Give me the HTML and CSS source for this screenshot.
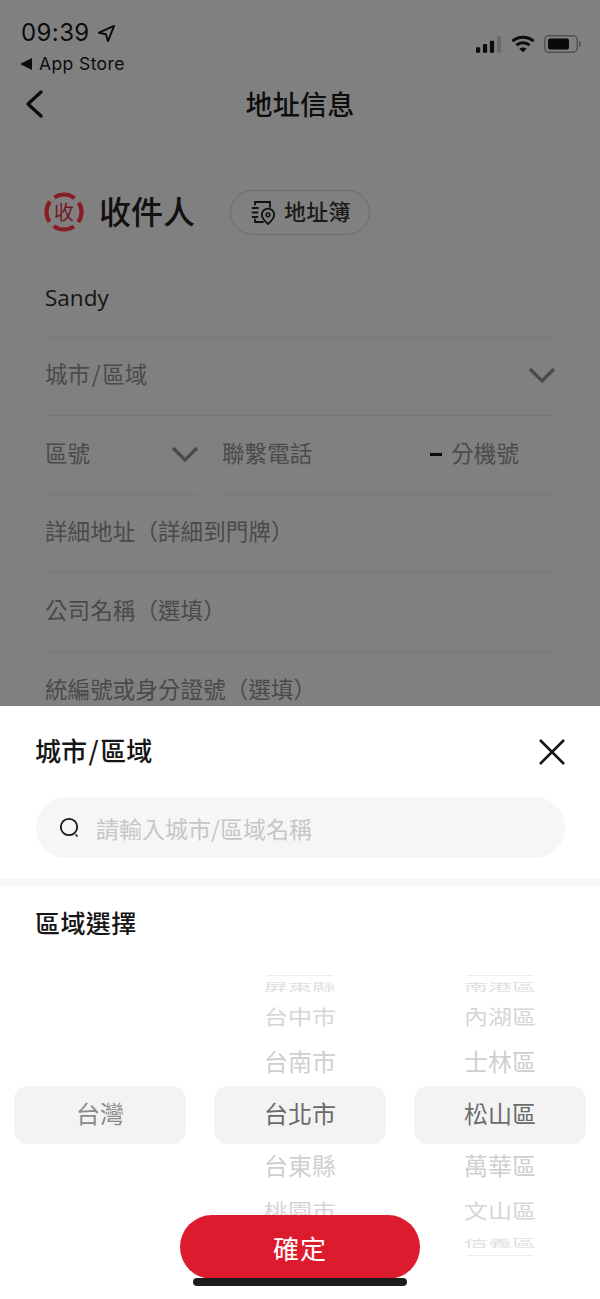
FILE: index.html
```html
<!DOCTYPE html>
<html lang="zh-Hant">
<head>
<meta charset="utf-8">
<title>地址信息</title>
<link rel="stylesheet" href="styles.css">
</head>
<body>
<div class="app">
  <div class="status">
    <div class="status-left">
      <div class="time-row">
        <span class="time">09:39</span>
        <svg class="loc" viewBox="0 0 20 20"><path d="M18 2 2 9.2l7.4 1.600L11.600 18Z" fill="none" stroke="#0c0c0c" stroke-width="2" stroke-linejoin="round"/></svg>
      </div>
      <div class="back-app"><span class="tri"></span><span>App Store</span></div>
    </div>
    <div class="status-right">
      <svg class="signal" viewBox="0 0 28 18"><rect x="0" y="12" width="4.5" height="6" rx="1" fill="#0c0c0c"/><rect x="7.5" y="8.5" width="4.5" height="9.5" rx="1" fill="#0c0c0c"/><rect x="15" y="5" width="4.5" height="13" rx="1" fill="#0c0c0c"/><rect x="22.5" y="0" width="4.5" height="18" rx="1" fill="#6a6a6a"/></svg>
      <svg class="wifi" viewBox="0 0 26 19"><path d="M1.5 6.5C8 .8 18 .8 24.5 6.5" fill="none" stroke="#0c0c0c" stroke-width="3.2"/><path d="M5.8 10.8c4.2-3.5 10.2-3.5 14.4 0" fill="none" stroke="#0c0c0c" stroke-width="3.2"/><path d="M13 18.5 9 14.6c2.3-1.9 5.7-1.9 8 0Z" fill="#0c0c0c"/></svg>
      <svg class="battery" viewBox="0 0 38 18"><rect x=".8" y=".8" width="32.4" height="16.4" rx="4" fill="none" stroke="#505050" stroke-width="1.4"/><rect x="4" y="3.5" width="21" height="11" rx="2" fill="#0a0a0a"/><rect x="35" y="6" width="1.6" height="6" rx=".8" fill="#505050"/></svg>
    </div>
  </div>

  <header class="nav">
    <svg class="nav-back" viewBox="0 0 20 30"><path d="M17 3 4 15l13 12" fill="none" stroke="#0d0d0d" stroke-width="3.4" stroke-linecap="round" stroke-linejoin="round"/></svg>
    <h1 class="nav-title">地址信息</h1>
  </header>

  <section class="recipient">
    <div class="badge">
      <svg class="badge-ring" viewBox="0 0 40 40"><circle cx="20" cy="20" r="17.500" fill="none" stroke="#8a1c25" stroke-width="4.200" stroke-dasharray="21.500 6" stroke-dashoffset="10.750"/></svg>
      <span class="badge-text">收</span>
    </div>
    <h2 class="recipient-title">收件人</h2>
    <div class="book">
      <svg class="book-icon" viewBox="0 0 26 26"><path d="M5 5.500V3h15v5M2.500 9h5.500M2.500 13.500h5M2.500 18h5M5 20.500V23h8" fill="none" stroke="#111" stroke-width="1.800" stroke-linecap="round"/><path d="M18 25c-4-3.500-6.200-6.500-6.200-9.200a6.200 6.200 0 0 1 12.400 0c0 2.700-2.200 5.700-6.200 9.200Z" fill="none" stroke="#111" stroke-width="1.800"/><circle cx="18" cy="15.800" r="1.900" fill="none" stroke="#111" stroke-width="1.500"/></svg>
      <span class="book-text">地址簿</span>
    </div>
  </section>

  <div class="form">
    <div class="field"><span class="value">Sandy</span></div>
    <div class="field field-between">
      <span class="ph">城市<span class="slash">/</span>區域</span>
      <svg class="chev" viewBox="0 0 28 18"><path d="M2 3l12 12L26 3" fill="none" stroke="#4a4a4a" stroke-width="3.2"/></svg>
    </div>
    <div class="field-row">
      <div class="field field-between code">
        <span class="ph">區號</span>
        <svg class="chev" viewBox="0 0 28 18"><path d="M2 3l12 12L26 3" fill="none" stroke="#4a4a4a" stroke-width="3.2"/></svg>
      </div>
      <div class="field field-between phone">
        <span class="ph">聯繫電話</span>
        <span class="ext"><span class="dash"></span><span class="ph">分機號</span></span>
      </div>
    </div>
    <div class="field"><span class="ph">詳細地址（詳細到門牌）</span></div>
    <div class="field"><span class="ph">公司名稱（選填）</span></div>
    <div class="field field-last"><span class="ph">統編號或身分證號（選填）</span></div>
  </div>

  <div class="sheet">
    <div class="sheet-head">
      <h3 class="sheet-title">城市<span class="slash">/</span>區域</h3>
      <svg class="close" viewBox="0 0 28 28"><path d="M2 2l24 24M26 2 2 26" fill="none" stroke="#161616" stroke-width="2.6"/></svg>
    </div>
    <div class="search">
      <svg class="search-icon" viewBox="0 0 24 24"><circle cx="11" cy="11" r="8.200" fill="none" stroke="#161616" stroke-width="1.800"/><path d="M17.500 18.500l2 2" stroke="#161616" stroke-width="1.600"/></svg>
      <span class="search-ph">請輸入城市/區域名稱</span>
    </div>
    <div class="divider"></div>
    <h3 class="pick-title">區域選擇</h3>
    <div class="picker">
      <div class="col">
        <div class="item selected"><span>台灣</span></div>
      </div>
      <div class="col">
        <div class="edge"></div>
        <div class="item far"><span>屏東縣</span></div>
        <div class="item mid"><span>台中市</span></div>
        <div class="item near"><span>台南市</span></div>
        <div class="item selected dark"><span>台北市</span></div>
        <div class="item near"><span>台東縣</span></div>
        <div class="item mid"><span>桃園市</span></div>
        <div class="item far"></div>
        <div class="edge"></div>
      </div>
      <div class="col">
        <div class="edge"></div>
        <div class="item far"><span>南港區</span></div>
        <div class="item mid"><span>內湖區</span></div>
        <div class="item near"><span>士林區</span></div>
        <div class="item selected dark"><span>松山區</span></div>
        <div class="item near"><span>萬華區</span></div>
        <div class="item mid"><span>文山區</span></div>
        <div class="item far"><span>信義區</span></div>
        <div class="edge"></div>
      </div>
    </div>
    <div class="confirm">確定</div>
    <div class="home"></div>
  </div>
</div>
</body>
</html>
```

FILE: styles.css
```css
* { box-sizing: border-box; }
html, body { margin: 0; padding: 0; }
body { font-family: "Noto Sans CJK TC", "Noto Sans", sans-serif; }
h1, h2, h3 { margin: 0; font-weight: 500; }

.app {
  position: relative;
  width: 600px;
  height: 1299px;
  overflow: hidden;
  background: #808080;
  color: #0d0d0d;
}

.status {
  display: flex;
  justify-content: space-between;
  height: 78px;
  padding: 19px 18px 0 20px;
}
.status-left { display: flex; flex-direction: column; }
.time-row { display: flex; align-items: center; gap: 7px; height: 28px; padding-left: 1px; }
.time { font: 400 24px/28px Inter, sans-serif; letter-spacing: .4px; }
.loc { width: 19px; height: 19px; }
.back-app {
  display: flex;
  align-items: center;
  gap: 7px;
  margin-top: 6px;
  font: 400 17.5px/22px Inter, sans-serif;
  letter-spacing: .4px;
}
.tri {
  width: 0;
  height: 0;
  border-style: solid;
  border-width: 6px 12px 6px 0;
  border-color: transparent #0d0d0d transparent transparent;
}
.status-right { display: flex; align-items: flex-start; gap: 9px; }
.signal { width: 26px; height: 17px; margin-top: 17px; }
.wifi { width: 24px; height: 18px; margin-top: 16px; }
.battery { width: 38px; height: 18px; margin-top: 16px; }

.nav {
  position: relative;
  display: flex;
  justify-content: center;
  align-items: center;
  height: 54px;
}
.nav-back { position: absolute; left: 24px; top: 11px; width: 20px; height: 30px; }
.nav-title { margin-bottom: 2px; font-size: 27px; line-height: 52px; letter-spacing: .3px; }

.recipient {
  display: flex;
  align-items: center;
  height: 46px;
  margin-top: 57px;
  padding-left: 44px;
}
.badge {
  position: relative;
  display: flex;
  align-items: center;
  justify-content: center;
  width: 40px;
  height: 40px;
}
.badge-ring { position: absolute; inset: 0; }
.badge-text { font-size: 20px; line-height: 40px; color: #701a21; }
.recipient-title { margin: 0 0 4px 15px; font-size: 32px; line-height: 42px; color: #111; }
.book {
  display: flex;
  align-items: center;
  gap: 8px;
  height: 45px;
  margin-left: 35px;
  padding: 0 18px 0 19px;
  border: 1px solid #6e6e6e;
  border-radius: 23px;
  font-size: 22px;
  font-weight: 500;
  color: #1a1a1a;
}
.book-text { margin-bottom: 4px; letter-spacing: .3px; }
.book-icon { width: 26px; height: 26px; }

.form { display: flex; flex-direction: column; margin-top: 24px; padding: 0 45px; }
.field {
  display: flex;
  align-items: center;
  height: 78.5px;
  border-bottom: 1px solid #767676;
}
.field-last { border-bottom: none; }
.field-between { justify-content: space-between; }
.field-row { display: flex; justify-content: space-between; }
.code { width: 153px; }
.phone { width: 333px; }
.value { font: 400 22.5px/30px "Open Sans", sans-serif; color: #151515; }
.ph { margin-bottom: 6px; font-size: 22.5px; line-height: 30px; letter-spacing: .1px; color: #4a4a4a; white-space: nowrap; }
.slash { margin: 0 1.5px; }
.chev { width: 28px; height: 18px; margin: 0 -1px 2px 0; }
.ext { display: flex; align-items: center; gap: 9px; padding-right: 36px; }
.dash { width: 12px; height: 3px; background: #0d0d0d; }

.sheet {
  position: absolute;
  left: 0;
  right: 0;
  bottom: 0;
  height: 593px;
  background: #fff;
  color: #161616;
}
.sheet-head {
  display: flex;
  justify-content: space-between;
  align-items: center;
  height: 91px;
  padding: 0 34px 0 35px;
}
.sheet-title { margin-bottom: 3px; font-size: 26px; line-height: 38px; white-space: nowrap; }
.close { width: 28px; height: 28px; }
.search {
  display: flex;
  align-items: center;
  gap: 14px;
  height: 61px;
  margin: 0 35px 0 36px;
  padding-left: 22px;
  border-radius: 31px;
  background: #f6f6f6;
}
.search-icon { width: 24px; height: 24px; }
.search-ph { font-size: 23px; line-height: 30px; color: #c6c6c6; white-space: nowrap; }
.divider { height: 7px; margin-top: 21px; background: #f8f8f8; }
.pick-title { margin-top: 17px; padding-left: 35px; font-size: 25px; line-height: 38px; letter-spacing: .4px; }

.picker {
  display: grid;
  grid-template-columns: repeat(3, 172px);
  gap: 28px;
  height: 300px;
  margin-top: 24px;
  padding: 0 14px;
}
.col { display: flex; flex-direction: column; justify-content: center; align-items: stretch; height: 300px; overflow: hidden; }
.item {
  display: flex;
  flex: none;
  justify-content: center;
  align-items: center;
  overflow: hidden;
  font-size: 24px;
  color: #c9c9c9;
}
.item span { display: block; margin-bottom: 4px; line-height: 30px; }
.selected {
  height: 58px;
  border-radius: 14px;
  background: #f3f3f4;
  color: #8a8a8a;
}
.dark { color: #6b6b6b; }
.near { height: 46px; color: #cfcfcf; }
.mid { height: 44px; color: #d6d6d6; }
.mid span { transform: scaleY(.86); }
.far { height: 18px; color: #e0e0e0; }
.far span { margin-bottom: 0; line-height: 18px; transform: scaleY(.42); }
.edge { flex: none; height: 1px; margin: 3px auto 2px; width: 66px; background: #ededed; }

.confirm {
  position: absolute;
  left: 180px;
  top: 509px;
  width: 240px;
  height: 64px;
  border-radius: 32px;
  background: #dc1c2e;
  color: #fff;
  font-size: 26px;
  font-weight: 400;
  letter-spacing: 1px;
  line-height: 66px;
  text-align: center;
}
.home {
  position: absolute;
  left: 193px;
  top: 572px;
  width: 214px;
  height: 8px;
  border-radius: 4px;
  background: #1c1c1c;
}
```
